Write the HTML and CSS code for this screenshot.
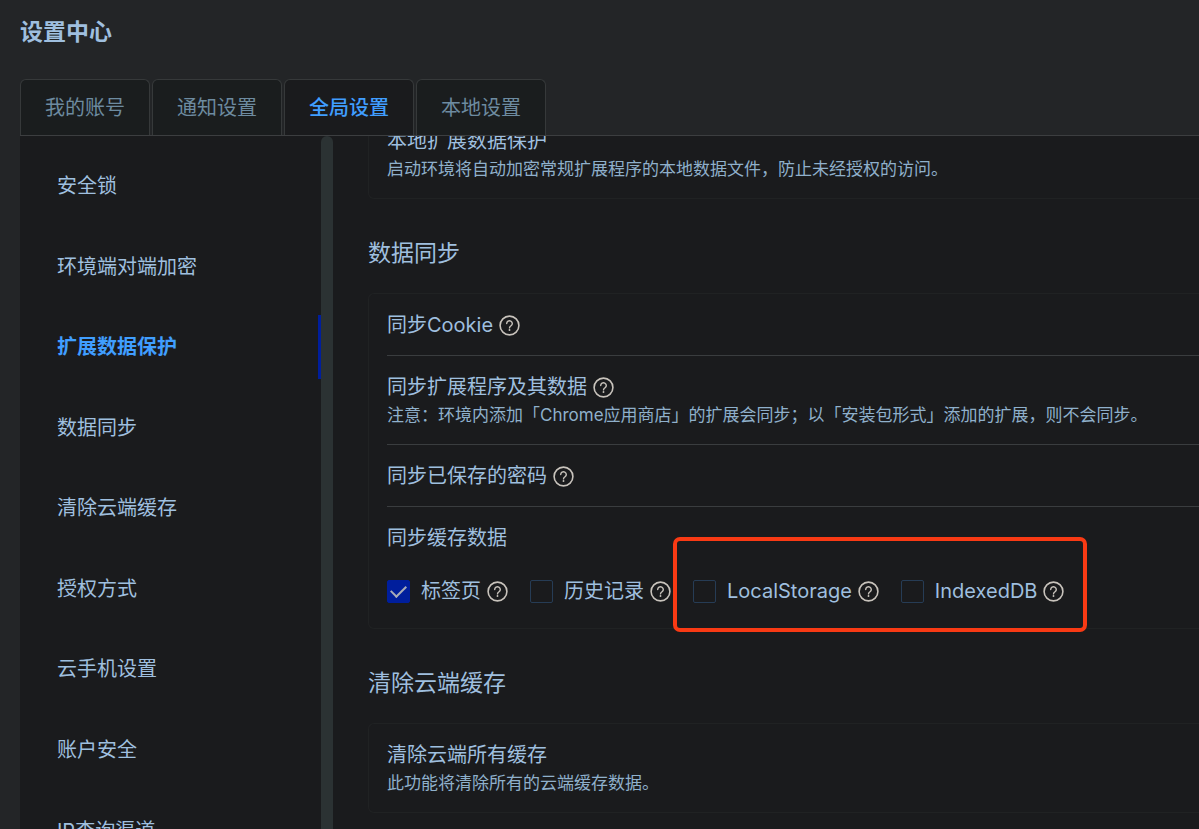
FILE: index.html
```html
<!DOCTYPE html>
<html lang="zh-CN">
<head>
<meta charset="utf-8">
<meta name="viewport" content="width=device-width, initial-scale=1">
<title>设置中心</title>
<link rel="stylesheet" href="styles.css">
</head>
<body>
<svg class="defs" width="0" height="0" aria-hidden="true">
  <symbol id="help" viewBox="0 0 21 21">
    <circle cx="10.5" cy="10.5" r="9.4" fill="none" stroke="currentColor" stroke-width="1.6"/>
    <path d="M7.7 8.5a2.8 2.7 0 1 1 4.4 2.2c-1 .7-1.6 1.1-1.6 2.2" fill="none" stroke="currentColor" stroke-width="1.4" stroke-linecap="round"/>
    <circle cx="10.5" cy="15" r="0.95" fill="currentColor"/>
  </symbol>
</svg>
<div class="app">
  <header class="header">
    <h1 class="title">设置中心</h1>
    <div class="tabs" role="tablist">
      <button class="tab" role="tab">我的账号</button>
      <button class="tab" role="tab">通知设置</button>
      <button class="tab tab-active" role="tab" aria-selected="true">全局设置</button>
      <button class="tab" role="tab">本地设置</button>
    </div>
  </header>
  <div class="panel">
    <nav class="sidebar">
      <a class="nav-item" href="#">安全锁</a>
      <a class="nav-item" href="#">环境端对端加密</a>
      <a class="nav-item nav-active" href="#">扩展数据保护</a>
      <a class="nav-item" href="#">数据同步</a>
      <a class="nav-item" href="#">清除云端缓存</a>
      <a class="nav-item" href="#">授权方式</a>
      <a class="nav-item" href="#">云手机设置</a>
      <a class="nav-item" href="#">账户安全</a>
      <a class="nav-item" href="#">IP查询渠道</a>
    </nav>
    <div class="scrollbar"></div>
    <main class="content">
      <section class="card card-first">
        <div class="row">
          <h3 class="row-title">本地扩展数据保护</h3>
          <p class="desc">启动环境将自动加密常规扩展程序的本地数据文件，防止未经授权的访问。</p>
        </div>
      </section>
      <h2 class="heading">数据同步</h2>
      <section class="card">
        <div class="row">
          <h3 class="row-title">同步Cookie<svg class="help"><use href="#help"/></svg></h3>
        </div>
        <div class="row">
          <h3 class="row-title">同步扩展程序及其数据<svg class="help"><use href="#help"/></svg></h3>
          <p class="desc">注意：环境内添加「Chrome应用商店」的扩展会同步；以「安装包形式」添加的扩展，则不会同步。</p>
        </div>
        <div class="row">
          <h3 class="row-title">同步已保存的密码<svg class="help"><use href="#help"/></svg></h3>
        </div>
        <div class="row">
          <h3 class="row-title">同步缓存数据</h3>
          <div class="checks">
            <label class="check"><input class="box" type="checkbox" checked><span class="check-text">标签页</span><svg class="help"><use href="#help"/></svg></label>
            <label class="check"><input class="box" type="checkbox"><span class="check-text">历史记录</span><svg class="help"><use href="#help"/></svg></label>
            <div class="marked">
              <label class="check"><input class="box" type="checkbox"><span class="check-text">LocalStorage</span><svg class="help"><use href="#help"/></svg></label>
              <label class="check"><input class="box" type="checkbox"><span class="check-text">IndexedDB</span><svg class="help"><use href="#help"/></svg></label>
            </div>
          </div>
        </div>
      </section>
      <h2 class="heading">清除云端缓存</h2>
      <section class="card">
        <div class="row">
          <h3 class="row-title">清除云端所有缓存</h3>
          <p class="desc">此功能将清除所有的云端缓存数据。</p>
        </div>
      </section>
    </main>
  </div>
</div>
</body>
</html>
```
FILE: styles.css
```css
* {
  box-sizing: border-box;
}

body {
  margin: 0;
  background: #232527;
  color: #9fbfdf;
  font: 20px/30px Inter, "Noto Sans CJK SC", sans-serif;
}

h1, h2, h3, p {
  margin: 0;
  font-weight: 400;
}

.defs {
  position: absolute;
}

.app {
  display: flex;
  flex-direction: column;
  height: 100vh;
  padding-left: 20px;
  overflow: hidden;
}

.header {
  flex: none;
  padding-top: 15px;
  border-bottom: 1px solid #3c3e40;
}

.title {
  font-size: 23px;
  line-height: 34px;
  font-weight: 700;
}

.tabs {
  display: flex;
  gap: 2px;
  margin-top: 30px;
}

.tab {
  height: 56px;
  padding: 0 24px;
  border: 1px solid #36393a;
  border-bottom: 0;
  border-radius: 6px 6px 0 0;
  background: #1a1d1e;
  color: #6d8ba0;
  font: inherit;
  white-space: nowrap;
}

.tab-active {
  background: #1a1b1d;
  color: #409eff;
  font-weight: 500;
}

.panel {
  display: flex;
  flex: 1;
  min-height: 0;
  background: #1a1b1d;
}

.sidebar {
  display: flex;
  flex: none;
  flex-direction: column;
  gap: 2vh;
  width: 301px;
  padding-top: 18px;
  overflow: hidden;
}

.nav-item {
  flex: none;
  height: 64px;
  padding-left: 37px;
  border-right: 3px solid transparent;
  color: inherit;
  line-height: 64px;
  text-decoration: none;
}

.nav-active {
  border-color: #001e9c;
  color: #409eff;
  font-weight: 700;
}

.scrollbar {
  flex: none;
  width: 12px;
  border-radius: 6px 6px 0 0;
  background: #2b3233;
}

.content {
  flex: 1;
  min-width: 0;
  padding-left: 35px;
  overflow: hidden;
}

.card {
  padding: 0 0 0 18px;
  border: 1px solid #202223;
  border-right: 0;
  border-radius: 6px 0 0 6px;
}

.card-first {
  margin-top: -27px;
}

.row {
  padding: 16px 0 15px;
  border-bottom: 1px solid #3a3d3f;
}

.row:last-child {
  border-bottom: 0;
}

.row-title {
  display: flex;
  gap: 6px;
  align-items: center;
  font-size: 20px;
  line-height: 30px;
}

.desc {
  color: #8fb0cb;
  font-size: 17px;
  line-height: 27px;
  white-space: nowrap;
}

.heading {
  margin: 37px 0 23px;
  font-size: 23px;
  line-height: 34px;
}

.help {
  flex: none;
  width: 21px;
  height: 21px;
  color: #c8c3bc;
}

.checks,
.marked {
  display: flex;
  gap: 22px;
}

.checks {
  margin: 23px 0 7px;
}

.check {
  display: flex;
  gap: 6px;
  align-items: center;
  white-space: nowrap;
}

.box {
  display: grid;
  flex: none;
  place-items: center;
  width: 23px;
  height: 23px;
  margin: 0 5px 0 0;
  border: 1px solid #263c55;
  border-radius: 2px;
  appearance: none;
}

.box:checked {
  border-color: #001e9c;
  background: #001e9c;
}

.box:checked::before {
  content: "";
  width: 7px;
  height: 13px;
  margin-bottom: 3px;
  border: solid #a9adb8;
  border-width: 0 2px 2px 0;
  transform: rotate(45deg);
}

.marked {
  position: relative;
}

.marked::after {
  content: "";
  position: absolute;
  inset: -39px -23px -26px -20px;
  border: 4px solid #f93a14;
  border-radius: 7px;
  pointer-events: none;
}
```
